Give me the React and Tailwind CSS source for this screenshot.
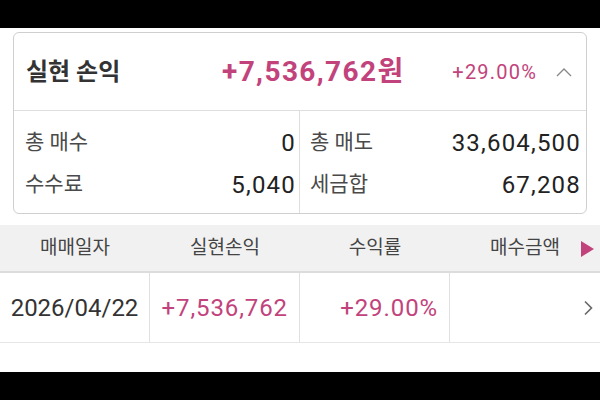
import React from "react";

const font = { fontFamily: 'Roboto, "Noto Sans CJK KR", "Noto Sans", sans-serif' };

export default function App() {
  return (
    <div className="w-[600px] h-[400px] bg-white flex flex-col overflow-hidden" style={font}>
      <div className="h-[28px] bg-black shrink-0" />
      <div className="px-[13px] pt-[4px] shrink-0">
        <div className="border border-[#cfcfcf] rounded-[6px] h-[182px] flex flex-col">
          <div className="h-[78px] border-b border-[#dedede] flex items-center pl-[12px] pr-[14px]">
            <div className="text-[24px] font-bold text-[#333] w-[196px]">실현 손익</div>
            <div className="text-[28px] font-bold text-[#c2437c] tracking-[1.4px]">+7,536,762원</div>
            <div className="ml-auto text-[20px] text-[#c2437c] tracking-[1.2px]">+29.00%</div>
            <svg className="ml-[19px]" width="16" height="10" viewBox="0 0 16 10">
              <polyline points="1,9 8,2 15,9" fill="none" stroke="#888" strokeWidth="1.3" />
            </svg>
          </div>
          <div className="flex-1 flex pt-[3px]">
            <div className="flex-1 border-r border-[#dedede] -mt-[3px] pt-[3px] flex flex-col justify-center gap-[10px] pl-[11px] pr-[3px]">
              <div className="flex items-center justify-between h-[32px]">
                <span className="text-[21px] text-[#4a4a4a]">총 매수</span>
                <span className="text-[24px] text-[#222] tracking-[1.2px]">0</span>
              </div>
              <div className="flex items-center justify-between h-[32px]">
                <span className="text-[21px] text-[#4a4a4a]">수수료</span>
                <span className="text-[24px] text-[#222] tracking-[1.2px]">5,040</span>
              </div>
            </div>
            <div className="flex-1 flex flex-col justify-center gap-[10px] pl-[10px] pr-[5px]">
              <div className="flex items-center justify-between h-[32px]">
                <span className="text-[21px] text-[#4a4a4a]">총 매도</span>
                <span className="text-[24px] text-[#222] tracking-[1.2px]">33,604,500</span>
              </div>
              <div className="flex items-center justify-between h-[32px]">
                <span className="text-[21px] text-[#4a4a4a]">세금합</span>
                <span className="text-[24px] text-[#222] tracking-[1.2px]">67,208</span>
              </div>
            </div>
          </div>
        </div>
      </div>
      <div className="mt-[11px] h-[48px] bg-[#f1f1f1] border-b-2 border-[#dcdcdc] grid grid-cols-4 shrink-0">
        <div className="flex items-center justify-center text-[19px] text-[#444]">매매일자</div>
        <div className="flex items-center justify-center text-[19px] text-[#444]">실현손익</div>
        <div className="flex items-center justify-center text-[19px] text-[#444]">수익률</div>
        <div className="relative flex items-center justify-center text-[19px] text-[#444]">
          매수금액
          <svg className="absolute right-[6px] top-[16px]" width="13" height="16" viewBox="0 0 13 16">
            <polygon points="0,0 13,8 0,16" fill="#c2437c" />
          </svg>
        </div>
      </div>
      <div className="h-[70px] border-b border-[#e6e6e6] grid grid-cols-4 shrink-0">
        <div className="flex items-center justify-center border-r border-[#e0e0e0] text-[24px] text-[#333]">2026/04/22</div>
        <div className="flex items-center justify-end pr-[11px] border-r border-[#e0e0e0] text-[24px] text-[#c2437c] tracking-[0.9px]">+7,536,762</div>
        <div className="flex items-center justify-end pr-[11px] border-r border-[#e0e0e0] text-[24px] text-[#c2437c] tracking-[0.9px]">+29.00%</div>
        <div className="flex items-center justify-end pr-[7px]">
          <svg width="10" height="16" viewBox="0 0 10 16">
            <polyline points="2,1.5 8.5,8 2,14.5" fill="none" stroke="#666" strokeWidth="1.6" />
          </svg>
        </div>
      </div>
      <div className="flex-1" />
      <div className="h-[28px] bg-black shrink-0" />
    </div>
  );
}
